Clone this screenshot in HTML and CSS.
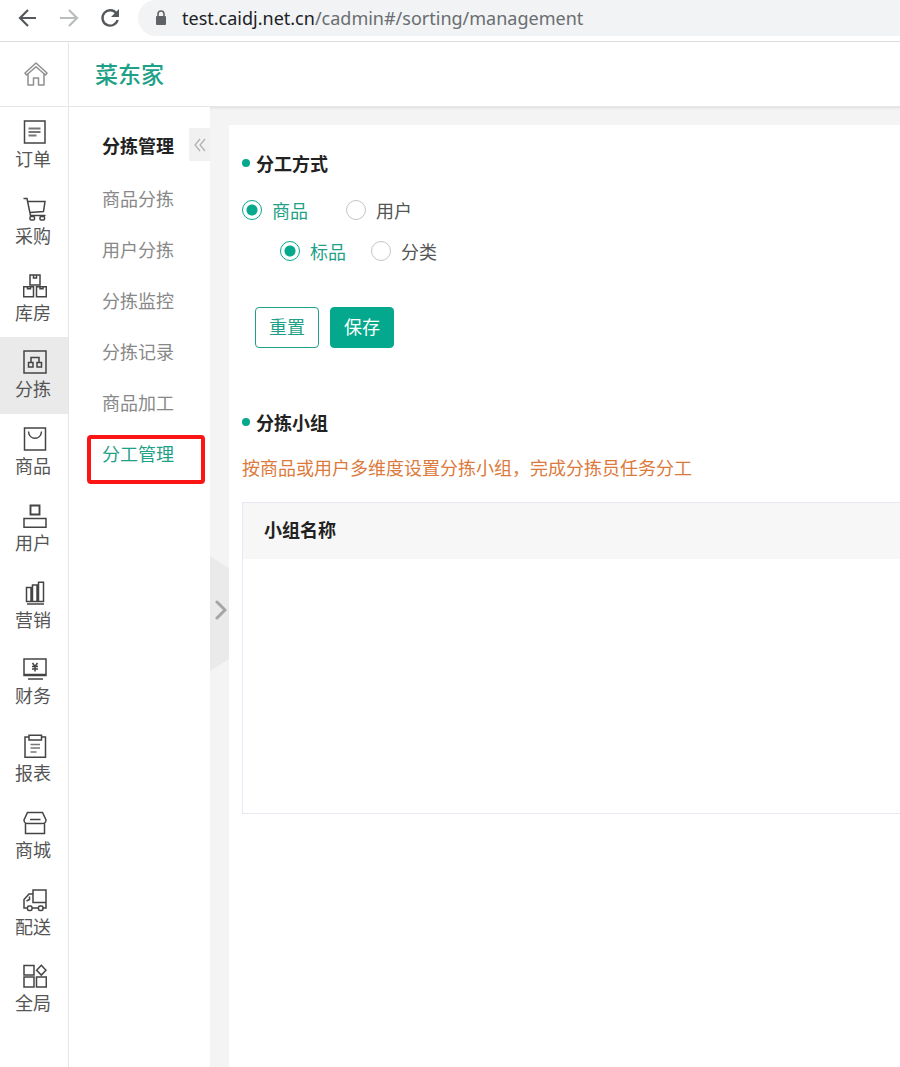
FILE: index.html
```html
<!DOCTYPE html>
<html lang="zh-CN">
<head>
    <meta charset="UTF-8">
    <meta name="viewport" content="width=device-width, initial-scale=1.0">
    <title>分工管理 - 菜东家</title>
    <link rel="stylesheet" href="styles.css">
</head>
<body>
    <div class="browser-bar">
        <button class="nav-btn" aria-label="后退">
            <svg width="20" height="20" viewBox="0 0 20 20"><path d="M18 10H2.500M10 2L2 10l8 8" fill="none" stroke="#55585c" stroke-width="2.200"/></svg>
        </button>
        <button class="nav-btn" aria-label="前进">
            <svg width="20" height="20" viewBox="0 0 20 20"><path d="M1 10h16.500M10 2l8 8-8 8" fill="none" stroke="#babcbe" stroke-width="2.200"/></svg>
        </button>
        <button class="nav-btn" aria-label="刷新">
            <svg width="20" height="20" viewBox="0 0 20 20"><path d="M16.500 5.500A7.700 7.700 0 1 0 17.600 12" fill="none" stroke="#55585c" stroke-width="2.400"/><path d="M19 1v8h-8z" fill="#55585c"/></svg>
        </button>
        <div class="address" role="textbox" aria-label="地址栏">
            <svg width="12" height="16" viewBox="0 0 12 16"><rect x="1" y="6" width="10" height="9" rx="1" fill="#5f6368"/><path d="M3 7V4a3 3 0 0 1 6 0v3" fill="none" stroke="#5f6368" stroke-width="1.600"/></svg>
            <span class="url"><span class="host">test.caidj.net.cn</span>/cadmin#/sorting/management</span>
        </div>
    </div>

    <header class="header">
        <a class="home" href="#" aria-label="首页">
            <svg width="24" height="24" viewBox="0 0 24 24" fill="none" stroke="#8f8f8f" stroke-width="1.500" stroke-linejoin="round" stroke-linecap="round"><path d="M1 11L12 1 23 11l-1.500 2L12 4.800 2.500 13z"/><path d="M4 12.500V23h5.500v-7h5v7H20V12.500"/></svg>
        </a>
        <a class="brand" href="#">菜东家</a>
    </header>

    <div class="layout">
        <nav class="rail">
            <a href="#">
                <svg class="icon" viewBox="0 0 24 24"><path d="M1.500 1h20.500v22H1.500z"/><path d="M5.500 8.500h12M5.500 12h12M5.500 15.500h8" stroke="#777" stroke-width="2"/></svg>
                订单
            </a>
            <a href="#">
                <svg class="icon" viewBox="0 0 24 24"><path d="M.5 1.500H4L7.500 18.500h15M5 4.500h17l-1.500 10L7 15.500"/><rect x="7" y="19.500" width="4.500" height="3.500" rx="1"/><rect x="17" y="19.500" width="4.500" height="3.500" rx="1"/></svg>
                采购
            </a>
            <a href="#">
                <svg class="icon" viewBox="0 0 24 24"><path d="M7 1h10v10H7zM.7 12.800h9.800v10H.7zM13.500 12.800h9.800v10h-9.800zM10.500 1v3h3V1M4.500 12.800v2h3v-2M17 12.800v2h3v-2"/></svg>
                库房
            </a>
            <a href="#" class="active">
                <svg class="icon" viewBox="0 0 24 24"><path d="M1 1h22v22H1z"/><path d="M5.500 12.500h4.500v4.500H5.500zM14 12.500h4.500v4.500H14zM8 12.500V7.500h8v5"/></svg>
                分拣
            </a>
            <a href="#">
                <svg class="icon" viewBox="0 0 24 24"><path d="M1.500 1h21v22h-21z"/><path d="M5.500 4.500c.5 9 12.500 9 13 0"/></svg>
                商品
            </a>
            <a href="#">
                <svg class="icon" viewBox="0 0 24 24"><path d="M7.500 1.500h9v9h-9z" stroke-width="1.900"/><path d="M1 14.500h22V23.200H1z"/></svg>
                用户
            </a>
            <a href="#">
                <svg class="icon" viewBox="0 0 24 24"><path d="M3.500 6.500h4.500v14H3.500zM9.500 4h4.500v16.500H9.500zM15.500 1.300H20.500v19.200h-5zM4 23h17"/></svg>
                营销
            </a>
            <a href="#">
                <svg class="icon" viewBox="0 0 24 24"><path d="M1 2h22v16.500H1z"/><path d="M1 17.500h22M5 22h15"/><path d="M9.500 6l2.500 3.500L14.500 6M9 9.500h6M9 12h6M12 9v5.500"/></svg>
                财务
            </a>
            <a href="#">
                <svg class="icon" viewBox="0 0 24 24"><path d="M6 3H2v20.300h20.500V3H18M6 1.200h12.500V6H6z"/><path d="M7.500 10.500h9.500M7.500 14h9.500M7.500 18h6" stroke="#777"/></svg>
                报表
            </a>
            <a href="#">
                <svg class="icon" viewBox="0 0 24 24"><path d="M4.500 1.500h15L23 9c0 4-3 3.500-5 3.500H6C4 12.500 1 13 1 9zM2.500 12.500v10h19v-10M7 8.500h10.500"/></svg>
                商城
            </a>
            <a href="#">
                <svg class="icon" viewBox="0 0 24 24"><path d="M10 2h13v12.500H10zM10 6H6L1 11.500V20h3.500M9 20h6.500M19.500 20H23v-5.500M6.500 8.500v3l-3 1.500"/><rect x="4.500" y="18" width="4.500" height="4.500" rx="1.500"/><rect x="15.500" y="18" width="4.500" height="4.500" rx="1.500"/></svg>
                配送
            </a>
            <a href="#">
                <svg class="icon" viewBox="0 0 24 24"><path d="M1 1.500h10V11H1zM1 13h10v10H1zM13.500 13h9.800v10h-9.800zM18.300 1.300l4.700 4.900-4.700 4.900-4.700-4.900z"/></svg>
                全局
            </a>
        </nav>

        <aside class="submenu">
            <h2>分拣管理</h2>
            <button class="collapse" aria-label="收起">
                <svg width="12" height="14" viewBox="0 0 12 14"><path d="M6 1L1 7l5 6M11 1L6 7l5 6" fill="none" stroke="#b0b0b0" stroke-width="1.200"/></svg>
            </button>
            <a href="#">商品分拣</a>
            <a href="#">用户分拣</a>
            <a href="#">分拣监控</a>
            <a href="#">分拣记录</a>
            <a href="#">商品加工</a>
            <a href="#" class="current">分工管理</a>
        </aside>

        <div class="content">
            <button class="expand" aria-label="展开">
                <svg width="14" height="20" viewBox="0 0 14 20"><path d="M4 2l8 8-8 8" fill="none" stroke="#a5a5a5" stroke-width="3" stroke-linecap="round"/></svg>
            </button>
            <main class="panel">
                <h3>分工方式</h3>
                <div class="radios">
                    <label><input type="radio" name="mode" checked><span>商品</span></label>
                    <label><input type="radio" name="mode"><span>用户</span></label>
                </div>
                <div class="radios sub">
                    <label><input type="radio" name="kind" checked><span>标品</span></label>
                    <label><input type="radio" name="kind"><span>分类</span></label>
                </div>
                <div class="actions">
                    <button class="btn">重置</button>
                    <button class="btn primary">保存</button>
                </div>

                <h3>分拣小组</h3>
                <p class="note">按商品或用户多维度设置分拣小组，完成分拣员任务分工</p>
                <table class="groups">
                    <thead>
                        <tr><th>小组名称</th></tr>
                    </thead>
                    <tbody>
                        <tr><td></td></tr>
                    </tbody>
                </table>
            </main>
        </div>
    </div>
</body>
</html>
```
FILE: styles.css
```css
*, *::before, *::after {
    box-sizing: border-box;
}
body {
    margin: 0;
    min-height: 100vh;
    display: flex;
    flex-direction: column;
    font-family: "Noto Sans CJK SC", sans-serif;
    font-size: 18px;
    line-height: 24px;
    color: #555;
    background-color: #fff;
}
a {
    color: inherit;
    text-decoration: none;
}
button {
    border: none;
    padding: 0;
    background: none;
    font: inherit;
    cursor: pointer;
}
svg {
    display: block;
}

/* browser bar */
.browser-bar {
    display: flex;
    align-items: flex-start;
    height: 42px;
    padding-left: 18px;
    border-bottom: 1px solid #dcdddf;
}
.nav-btn {
    width: 20px;
    height: 36px;
    margin-right: 21px;
    display: flex;
    align-items: center;
}
.address {
    flex: 1;
    height: 36px;
    margin-left: -3px;
    padding-left: 17px;
    display: flex;
    align-items: center;
    gap: 15px;
    border-radius: 18px 0 0 18px;
    background-color: #f1f3f4;
}
.url {
    font-family: "Noto Sans", "Open Sans", sans-serif;
    color: #6a6d71;
    white-space: nowrap;
}
.host {
    color: #202124;
}

/* header */
.header {
    display: flex;
    height: 65px;
    border-bottom: 1px solid #e6e6e6;
}
.home {
    width: 69px;
    padding-left: 3px;
    display: flex;
    align-items: center;
    justify-content: center;
    border-right: 1px solid #e6e6e6;
}
.brand {
    padding-left: 26px;
    font-size: 23px;
    font-weight: 500;
    line-height: 62px;
    color: #1fa188;
}

.layout {
    flex: 1;
    display: flex;
}

/* icon rail */
.rail {
    width: 69px;
    padding-bottom: 39px;
    display: flex;
    flex-direction: column;
    border-right: 1px solid #e6e6e6;
}
.rail a {
    flex: 1;
    display: flex;
    flex-direction: column;
    align-items: center;
    gap: 2px;
    padding: 13px 2px 0 0;
}
.rail a.active {
    background-color: #eaeaea;
}
.icon {
    width: 24px;
    height: 24px;
    margin-left: 3px;
    fill: none;
    stroke: #444;
    stroke-width: 1.5;
}

/* second level menu */
.submenu {
    position: relative;
    width: 141px;
    padding: 26px 0 0 33px;
    color: #888;
}
.submenu h2 {
    margin: 0 0 16px;
    font-size: 18px;
    line-height: 24px;
    color: #222;
}
.submenu a {
    position: relative;
    display: block;
    line-height: 51px;
}
.submenu a.current {
    color: #1fa188;
}
.submenu a.current::after {
    content: "";
    position: absolute;
    top: 7px;
    left: -15px;
    right: 5px;
    height: 49px;
    border: 4px solid #fb1515;
    border-radius: 4px;
}
.collapse {
    position: absolute;
    top: 21px;
    right: 0;
    width: 21px;
    height: 33px;
    display: flex;
    align-items: center;
    justify-content: center;
    background-color: #f1f1f1;
}

/* content */
.content {
    position: relative;
    flex: 1;
    min-width: 0;
    display: flex;
    padding: 18px 0 0 19px;
    background-color: #f4f4f4;
    box-shadow: inset 0 3px 3px -2px #ddd;
}
.expand {
    position: absolute;
    top: 449px;
    left: 0;
    width: 19px;
    height: 115px;
    padding-bottom: 8px;
    display: flex;
    align-items: center;
    justify-content: center;
    background-color: #eaeaea;
    clip-path: polygon(0 0, 100% 12px, 100% 103px, 0 100%);
}
.panel {
    flex: 1;
    min-width: 0;
    padding: 26px 0 0 13px;
    background-color: #fff;
}
.panel h3 {
    display: flex;
    align-items: center;
    gap: 6px;
    margin: 0;
    font-size: 18px;
    line-height: 24px;
    color: #222;
}
.panel h3::before {
    content: "";
    width: 8px;
    height: 8px;
    border-radius: 50%;
    background-color: #04a98d;
}
.radios {
    display: flex;
    gap: 38px;
    margin-top: 23px;
}
.radios.sub {
    gap: 25px;
    margin-top: 17px;
    padding-left: 38px;
}
.radios label {
    display: flex;
    align-items: center;
    gap: 10px;
    cursor: pointer;
}
.radios input {
    appearance: none;
    width: 20px;
    height: 20px;
    margin: 0;
    border: 1px solid #c4c4c4;
    border-radius: 50%;
}
.radios input:checked {
    border-color: #04a98d;
    background: radial-gradient(circle, #04a98d 5px, #fff 6px);
}
.radios input:checked + span {
    color: #1fa188;
}
.actions {
    display: flex;
    gap: 11px;
    margin: 44px 0 62px;
    padding-left: 13px;
}
.btn {
    width: 64px;
    height: 41px;
    padding-bottom: 3px;
    border: 1px solid #1fa188;
    border-radius: 4px;
    color: #1fa188;
    background-color: #fff;
}
.btn.primary {
    border-color: #04a98d;
    color: #fff;
    background-color: #04a98d;
}
.note {
    margin: 21px 0 23px;
    color: #dc7a3c;
}
.groups {
    width: 100%;
    border-collapse: collapse;
    border: 1px solid #e6e9f2;
    border-right: none;
}
.groups th {
    height: 56px;
    padding: 0 21px 3px;
    text-align: left;
    color: #222;
    background-color: #f7f7f7;
}
.groups td {
    height: 255px;
}
```
